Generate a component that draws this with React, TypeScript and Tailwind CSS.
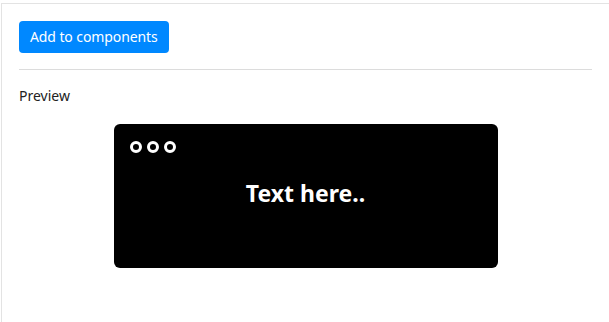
import React from "react";

export default function App() {
  return (
    <div className="w-[609px] h-[322px] bg-white overflow-hidden pt-[3px] pl-[1px]" style={{ fontFamily: '"Noto Sans", "Open Sans", sans-serif' }}>
      <div className="h-full border-t border-l border-[#e3e3e3] pl-[17px] pr-[17px] pt-[17px]">
        <button className="h-[32px] px-[11px] rounded-[4px] bg-[#0088ff] text-white text-[14px] leading-none tracking-[-0.1px]">
          Add to components
        </button>
        <div className="mt-[16px] border-t border-[#dcdcdc]" />
        <div className="mt-[16px] text-[14px] leading-[20px] text-[#222]">Preview</div>
        <div className="flex justify-center mt-[18px]">
          <div className="w-[384px] h-[144px] bg-black rounded-[6px] pt-[17px] pl-[16px] flex flex-col">
            <div className="flex gap-[5px]">
              <span className="w-[12px] h-[12px] rounded-full border-[3px] border-white" />
              <span className="w-[12px] h-[12px] rounded-full border-[3px] border-white" />
              <span className="w-[12px] h-[12px] rounded-full border-[3px] border-white" />
            </div>
            <div className="flex-1 flex items-start justify-center pr-[16px] pt-[25px]">
              <span className="text-white text-[23px] font-bold leading-[30px]">Text here..</span>
            </div>
          </div>
        </div>
      </div>
    </div>
  );
}
